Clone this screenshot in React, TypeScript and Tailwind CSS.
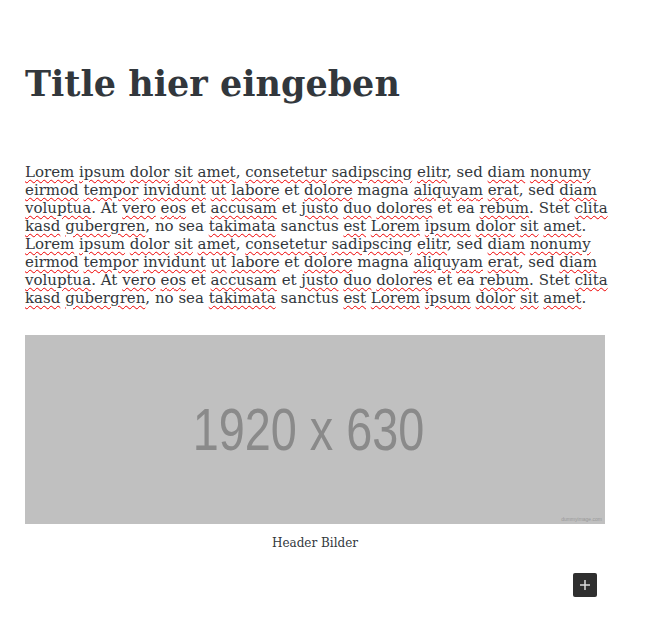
import { Fragment } from 'react'

// words flagged by the spell checker end with *, they get a red wavy underline
const block = [
  'Lorem* ipsum* dolor* sit* amet,* consetetur* sadipscing* elitr,* sed diam* nonumy*',
  'eirmod* tempor* invidunt* ut* labore* et dolore* magna aliquyam* erat,* sed diam*',
  'voluptua.* At vero* eos* et accusam* et justo* duo* dolores* et ea rebum.* Stet clita*',
  'kasd* gubergren,* no sea takimata* sanctus est* Lorem* ipsum* dolor* sit* amet.*',
]
const lines = [...block, ...block]

function Word({ raw }: { raw: string }) {
  if (!raw.endsWith('*')) return <>{raw}</>
  const m = raw.slice(0, -1).match(/^(.*?)([.,]?)$/)!
  return (
    <>
      <span className="underline decoration-wavy decoration-[#e00] decoration-1 underline-offset-2">{m[1]}</span>
      {m[2]}
    </>
  )
}

function Paragraph() {
  return (
    <p className="mt-[55px] text-[15px] leading-[18px] text-[#32373c] whitespace-nowrap">
      {lines.map((line, li) => (
        <Fragment key={li}>
          {line.split(' ').map((w, i, arr) => (
            <Fragment key={i}>
              <Word raw={w} />
              {i < arr.length - 1 ? ' ' : ''}
            </Fragment>
          ))}
          {li < lines.length - 1 && <br />}
        </Fragment>
      ))}
    </p>
  )
}

export default function App() {
  return (
    <div className="min-h-screen bg-white font-['DejaVu_Serif',serif]">
      <div className="w-[580px] ml-[25px] pt-[60px]">
        <h1 className="text-[35px] font-bold leading-[48px] text-[#32373c]">Title hier eingeben</h1>
        <Paragraph />

        <figure className="mt-[28px]">
          <div className="relative h-[189px] bg-[#c0c0c0] flex items-center justify-center overflow-hidden">
            <span className="font-['Liberation_Sans',sans-serif] text-[60px] leading-none text-[#8a8a8a] scale-x-[0.78] -translate-x-[7px] whitespace-nowrap">
              1920 x 630
            </span>
            <span className="absolute right-[3px] bottom-[1px] font-['Liberation_Sans',sans-serif] text-[5px] text-[#999]">
              dummyimage.com
            </span>
          </div>
          <figcaption className="mt-[10px] text-center text-[12px] text-[#32373c]">Header Bilder</figcaption>
        </figure>
      </div>

      <div className="w-[597px] flex justify-end mt-[21px]">
        <button className="w-6 h-6 rounded-[2px] bg-[#2f2f2f] flex items-center justify-center">
          <svg width="14" height="14" viewBox="0 0 14 14" fill="none">
            <path d="M7 2v10M2 7h10" stroke="#ddd" strokeWidth="1.5" />
          </svg>
        </button>
      </div>
    </div>
  )
}
